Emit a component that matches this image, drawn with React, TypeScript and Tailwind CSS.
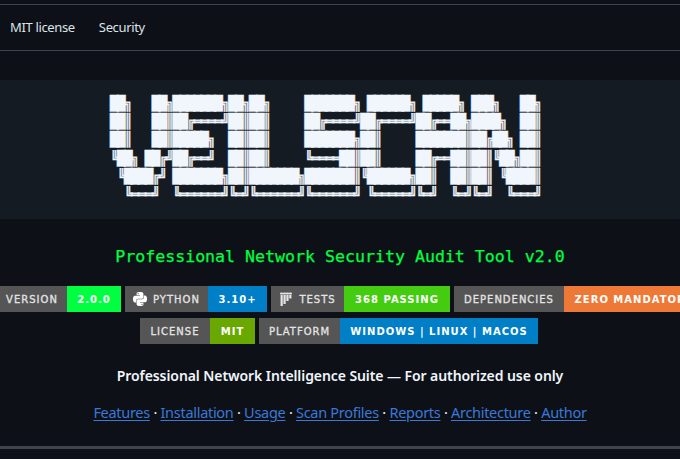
import { SiPython, SiPytest } from 'react-icons/si'
import type { ReactNode } from 'react'

const banner = `██╗   ██╗███████╗██╗██╗     ███████╗ ██████╗ █████╗ ███╗   ██╗
██║   ██║██╔════╝██║██║     ██╔════╝██╔════╝██╔══██╗████╗  ██║
██║   ██║█████╗  ██║██║     ███████╗██║     ███████║██╔██╗ ██║
╚██╗ ██╔╝██╔══╝  ██║██║     ╚════██║██║     ██╔══██║██║╚██╗██║
 ╚████╔╝ ███████╗██║███████╗███████║╚██████╗██║  ██║██║ ╚████║
  ╚═══╝  ╚══════╝╚═╝╚══════╝╚══════╝ ╚═════╝╚═╝  ╚═╝╚═╝  ╚═══╝`

const links = ['Features', 'Installation', 'Usage', 'Scan Profiles', 'Reports', 'Architecture', 'Author']

function Badge({ label, value, color, labelW, valueW, icon, labelClass }: {
  label: string
  value: string
  color: string
  labelW: string
  valueW: string
  icon?: ReactNode
  labelClass?: string
}) {
  return (
    <div className="flex h-[26px] shrink-0 font-['DejaVu_Sans',sans-serif] text-[10px] tracking-[1px] text-white">
      <div className={`flex items-center justify-center gap-[6px] bg-[#555] font-normal text-[#e4e4e4] [-webkit-text-stroke:0.3px] ${labelW} ${labelClass ?? ''}`}>
        {icon}
        {label}
      </div>
      <div className={`flex items-center justify-center overflow-hidden whitespace-nowrap font-bold ${color} ${valueW}`}>
        {value}
      </div>
    </div>
  )
}

export default function App() {
  return (
    <div className="h-[459px] w-[680px] overflow-hidden bg-[#0d1117] pt-1">
      <div className="h-[1px] bg-[#3d444d]" />
      <nav className="flex h-[46px] items-center gap-6 border-b border-[#3d444d] pl-[10px] font-['Noto_Sans',sans-serif] text-[13px] tracking-[-0.35px] text-[#dde3ea]">
        <span>MIT license</span>
        <span>Security</span>
      </nav>

      <div className="mt-[29px] h-[139px] overflow-hidden bg-[#151b23] pl-[110px] pt-[14px]">
        <pre className="font-['DejaVu_Sans_Mono',monospace] text-[14px] leading-[18.2px] tracking-[-1.48px] text-[#f0f6fc] [-webkit-text-stroke:0.4px]">
          {banner}
        </pre>
      </div>

      <h2 className="mt-[27px] text-center font-['DejaVu_Sans_Mono',monospace] text-[16.6px] leading-[22px] font-normal text-[#00ff41] [-webkit-text-stroke:0.25px]">
        Professional Network Security Audit Tool v2.0
      </h2>

      <div className="mt-[18px] flex gap-1 overflow-hidden">
        <Badge label="VERSION" value="2.0.0" color="bg-[#00ff41]" labelW="w-[67px]" valueW="w-[54px]" labelClass="pr-[3px]" />
        <Badge label="PYTHON" value="3.10+" color="bg-[#007ec6]" labelW="w-[83px]" valueW="w-[59px]" icon={<SiPython size={14} className="text-white" />} />
        <Badge label="TESTS" value="368 PASSING" color="bg-[#44cc11]" labelW="w-[73px]" valueW="w-[106px]" icon={<SiPytest size={14} className="text-[#e4e4e4]" />} />
        <Badge label="DEPENDENCIES" value="ZERO MANDATORY" color="bg-[#ee7836]" labelW="w-[110px]" valueW="w-[140px]" />
      </div>
      <div className="mt-[6px] flex justify-center gap-1 pr-[2px]">
        <Badge label="LICENSE" value="MIT" color="bg-[#68a800]" labelW="w-[70px]" valueW="w-[45px]" />
        <Badge label="PLATFORM" value="WINDOWS | LINUX | MACOS" color="bg-[#007ec6]" labelW="w-[81px]" valueW="w-[198px]" />
      </div>

      <p className="mt-[21px] text-center font-['Noto_Sans',sans-serif] text-[14px] leading-[22px] font-semibold tracking-[-0.08px] text-[#f0f6fc]">
        Professional Network Intelligence Suite — For authorized use only
      </p>

      <div className="mt-[14px] text-center font-['Noto_Sans',sans-serif] text-[14.5px] leading-[22px] tracking-[-0.29px] text-[#f0f6fc]">
        {links.map((link, i) => (
          <span key={link}>
            {i > 0 && ' · '}
            <a href="#" className="text-[#3b78d8] underline underline-offset-2">{link}</a>
          </span>
        ))}
      </div>

      <div className="mt-[23px] h-[3px] bg-[#3d444d]" />
    </div>
  )
}
